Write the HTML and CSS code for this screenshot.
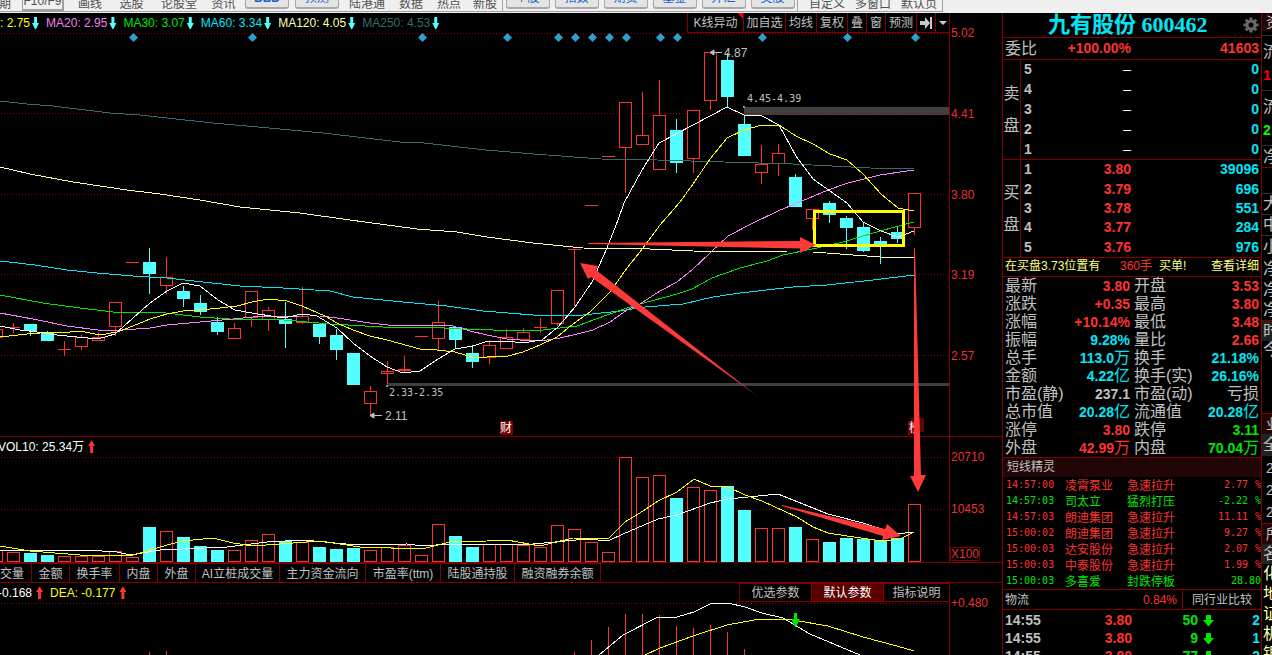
FILE: index.html
```html
<!DOCTYPE html>
<html lang="zh-CN">
<head>
<meta charset="utf-8">
<title>九有股份 600462</title>
<link rel="stylesheet" href="styles.css">
</head>
<body>
<nav class="toolbar">
  <div class="toolset">
    <button class="tool first">期</button>
    <button class="tool boxed">F10/F9</button>
    <button class="tool">画线</button>
    <button class="tool">选股</button>
    <button class="tool">论股堂</button>
    <button class="tool">资讯</button>
    <button class="tool key strong">BBD</button>
    <button class="tool key">预测</button>
    <button class="tool">陆港通</button>
    <button class="tool">数据</button>
    <button class="tool">热点</button>
    <button class="tool">新股</button>
    <span class="divider"></span>
    <button class="tool key">个股</button>
    <button class="tool key">指数</button>
    <button class="tool key">期货</button>
    <button class="tool key">基金</button>
    <button class="tool key">外汇</button>
    <button class="tool key">美股</button>
    <span class="divider"></span>
    <button class="tool">自定义</button>
    <button class="tool">多窗口</button>
    <button class="tool">默认页</button>
  </div>
</nav>

<div class="workspace">
  <main class="charts">
    <section class="panel price">
      <header class="head">
        <div class="legend">
          <span class="yellow">: 2.75<i class="mark down"></i></span>
          <span class="violet">MA20: 2.95<i class="mark down"></i></span>
          <span class="green">MA30: 3.07<i class="mark down"></i></span>
          <span class="aqua">MA60: 3.34<i class="mark down"></i></span>
          <span class="cream">MA120: 4.05<i class="mark down"></i></span>
          <span class="teal">MA250: 4.53<i class="mark down"></i></span>
        </div>
        <div class="actions">
          <button class="act flagged w56">K线异动</button>
          <button class="act w42">加自选</button>
          <button class="act w31">均线</button>
          <button class="act w31">复权</button>
          <button class="act w19">叠</button>
          <button class="act w19">窗</button>
          <button class="act w31">预测</button>
          <button class="act w19" aria-label="最新"><svg width="13" height="12" viewBox="0 0 13 12"><path d="M0 4h5V0l5 6-5 6V8H0z M10 0h2v12h-2z" fill="#c8c8c8"/></svg></button>
          <button class="act w14" aria-label="更多"><svg width="8" height="4" viewBox="0 0 8 4"><path d="M0 0h8L4 4z" fill="#c8c8c8"/></svg></button>
        </div>
      </header>
      <svg class="plot" id="price" height="403" viewBox="0 33 949 403" preserveAspectRatio="xMaxYMin meet"></svg>
      <div class="axis"><span>5.02</span><span>4.41</span><span>3.80</span><span>3.19</span><span>2.57</span></div>
    </section>

    <section class="panel volume">
      <header class="head">
        <div class="legend"><span class="white">VOL10: 25.34万<i class="mark up"></i></span></div>
      </header>
      <svg class="plot" id="volume" height="105" viewBox="0 457 949 105" preserveAspectRatio="xMaxYMin meet"></svg>
      <div class="axis"><span>20710</span><span>10453</span><span class="unit">X100</span></div>
    </section>

    <div class="tabs">
      <button class="tab w32">交量</button>
      <button class="tab w38">金额</button>
      <button class="tab w50">换手率</button>
      <button class="tab w38">内盘</button>
      <button class="tab w38">外盘</button>
      <button class="tab w84">AI立桩成交量</button>
      <button class="tab w86">主力资金流向</button>
      <button class="tab w75">市盈率(ttm)</button>
      <button class="tab w74">陆股通持股</button>
      <button class="tab w86">融资融券余额</button>
    </div>

    <section class="panel macd">
      <header class="head">
        <div class="legend"><span class="white">-0.168<i class="mark up"></i></span><span class="yellow">DEA: -0.177<i class="mark up"></i></span></div>
        <div class="actions">
          <button class="act w72">优选参数</button>
          <button class="act w72 active">默认参数</button>
          <button class="act w66">指标说明</button>
        </div>
      </header>
      <svg class="plot" id="macd" height="52" viewBox="0 603 949 52" preserveAspectRatio="xMaxYMin meet"></svg>
      <div class="axis"><span>+0.480</span></div>
    </section>

    <svg class="notes" height="642" viewBox="0 13 1002 642" preserveAspectRatio="xMaxYMin meet">
      <rect x="814.5" y="211.5" width="89" height="34" fill="none" stroke="#ffff00" stroke-width="3"/>
      <g fill="#fe3939">
        <path d="M588 243L800 241V237L816 245L800 253V248.500L588 244z"/>
        <path d="M580 263L598 266L596 270L756 395L591 277L588 279z"/>
        <path d="M914 248L915 248L921 475H926L918 492L910 476H914z"/>
        <path d="M782 505L885 529L887 524L901 536L882 540L883 536L782 506z"/>
      </g>
    </svg>
  </main>

  <aside class="quote">
    <h1 class="title"><span>九有股份 600462</span>
      <button class="gear" aria-label="设置"><svg width="16" height="16" viewBox="-8 -8 16 16"><circle r="4" fill="none" stroke="#686868" stroke-width="3"/><path d="M0-7.500V-4M0 7.500V4M-7.500 0H-4M7.500 0H4M-5.300-5.300L-3-3M5.300 5.300L3 3M-5.300 5.300L-3 3M5.300-5.300L3-3" stroke="#686868" stroke-width="3"/></svg></button>
    </h1>
    <div class="ratio"><span class="lbl">委比</span><b class="red">+100.00%</b><b class="red">41603</b></div>
    <div class="book">
      <div class="side"><span>卖</span><span>盘</span></div>
      <table>
        <tr><th>5</th><td class="dash">–</td><td>0</td></tr>
        <tr><th>4</th><td class="dash">–</td><td>0</td></tr>
        <tr><th>3</th><td class="dash">–</td><td>0</td></tr>
        <tr><th>2</th><td class="dash">–</td><td>0</td></tr>
        <tr><th>1</th><td class="dash">–</td><td>0</td></tr>
      </table>
    </div>
    <div class="book bids">
      <div class="side"><span>买</span><span>盘</span></div>
      <table>
        <tr><th>1</th><td class="red">3.80</td><td>39096</td></tr>
        <tr><th>2</th><td class="red">3.79</td><td>696</td></tr>
        <tr><th>3</th><td class="red">3.78</td><td>551</td></tr>
        <tr><th>4</th><td class="red">3.77</td><td>284</td></tr>
        <tr><th>5</th><td class="red">3.76</td><td>976</td></tr>
      </table>
    </div>
    <div class="notice"><span>在买盘3.73位置有</span><span class="red">360手</span><span>买单!</span><a href="#">查看详细</a></div>
    <table class="stats">
      <tr><th>最新</th><td class="red">3.80</td><th>开盘</th><td class="red">3.53</td></tr>
      <tr><th>涨跌</th><td class="red">+0.35</td><th>最高</th><td class="red">3.80</td></tr>
      <tr><th>涨幅</th><td class="red">+10.14%</td><th>最低</th><td class="red">3.48</td></tr>
      <tr><th>振幅</th><td class="aqua">9.28%</td><th>量比</th><td class="red">2.66</td></tr>
      <tr><th>总手</th><td class="aqua">113.0<i>万</i></td><th>换手</th><td class="aqua">21.18%</td></tr>
      <tr><th>金额</th><td class="aqua">4.22<i>亿</i></td><th>换手(实)</th><td class="aqua">26.16%</td></tr>
      <tr><th>市盈(静)</th><td>237.1</td><th>市盈(动)</th><td><i>亏损</i></td></tr>
      <tr><th>总市值</th><td class="aqua">20.28<i>亿</i></td><th>流通值</th><td class="aqua">20.28<i>亿</i></td></tr>
      <tr><th>涨停</th><td class="red">3.80</td><th>跌停</th><td class="green">3.11</td></tr>
      <tr><th>外盘</th><td class="red">42.99<i>万</i></td><th>内盘</th><td class="green">70.04<i>万</i></td></tr>
    </table>
    <h2 class="subhead">短线精灵</h2>
    <table class="alerts">
      <tr class="red"><td>14:57:00</td><td>凌霄泵业</td><td>急速拉升</td><td>2.77</td><td>%</td></tr>
      <tr class="green"><td>14:57:03</td><td>司太立</td><td>猛烈打压</td><td>-2.22</td><td>%</td></tr>
      <tr class="red"><td>14:57:03</td><td>朗迪集团</td><td>急速拉升</td><td>11.11</td><td>%</td></tr>
      <tr class="red"><td>15:00:02</td><td>朗迪集团</td><td>急速拉升</td><td>9.27</td><td>%</td></tr>
      <tr class="red"><td>15:00:03</td><td>达安股份</td><td>急速拉升</td><td>2.07</td><td>%</td></tr>
      <tr class="red"><td>15:00:03</td><td>中泰股份</td><td>急速拉升</td><td>1.99</td><td>%</td></tr>
      <tr class="green"><td>15:00:03</td><td>多喜爱</td><td>封跌停板</td><td colspan="2">28.80</td></tr>
    </table>
    <div class="sector"><span>物流</span><span class="red">0.84%</span><button class="peer">同行业比较</button></div>
    <table class="ticks">
      <tr><td>14:55</td><td class="red">3.80</td><td class="green">50</td><td><i class="mark sell"></i></td><td class="aqua">2</td></tr>
      <tr><td>14:55</td><td class="red">3.80</td><td class="green">9</td><td><i class="mark sell"></i></td><td class="aqua">1</td></tr>
      <tr><td>14:55</td><td class="red">3.80</td><td class="green">77</td><td><i class="mark sell"></i></td><td class="aqua">2</td></tr>
    </table>
  </aside>

  <aside class="rail">
    <span class="h18 small wine">资</span>
    <span class="h5 line"></span>
    <span class="h31">流</span><b class="h24 bright line">1</b>
    <span class="h31">流</span><b class="h24 lime line">2</b>
    <span class="h22 redline">净</span>
    <span class="h26 line"></span>
    <span class="h21 line">大</span><span class="h21 line">中</span><span class="h22">小</span>
    <span class="h21">净</span><span class="h21">净</span><span class="h21 redline">净</span>
    <span class="h20 grey">时</span><span class="h18">今</span>
    <span class="h55 redline"></span>
    <span class="h20 small wine">业</span><span class="h22 grey">全</span>
    <span class="h24 small">2</span><span class="h20 small">2</span><span class="h24 small redline">2</span>
    <span class="h20 small wine">所</span><span class="h20 grey">名</span>
    <span class="h20 cream">化</span><span class="h20 cream">地</span><span class="h20 cream">证</span><span class="h20 cream">机</span><span class="h20 cream">银</span>
  </aside>
</div>
<script src="chart.js"></script>
</body>
</html>
```

FILE: styles.css
```css
* { box-sizing: border-box; }
body {
  margin: 0;
  height: 100vh;
  overflow: hidden;
  display: flex;
  flex-direction: column;
  background: #000;
  color: #c0c0c0;
  font: 12px/16px "Liberation Sans", "Noto Sans CJK SC", sans-serif;
}
button { font: inherit; color: inherit; background: none; border: 0; padding: 0; white-space: nowrap; }
a { color: inherit; text-decoration: none; }
table { border-collapse: collapse; width: 100%; }
td, th { padding: 0; }
i { font-style: normal; }

.red { color: #ff3232; }
.green { color: #00e600; }
.aqua { color: #00e6f5; }
.yellow { color: #ffff00; }
.violet { color: #f080f0; }
.cream { color: #ffffb0; }
.teal { color: #346c70; }
.white { color: #fff; }

/* Toolbar */
.toolbar { flex: none; height: 13px; overflow: hidden; background: #f0f0f0; color: #505050; display: flex; }
.toolset {
  height: 12px;
  border: solid #a0a0a0;
  border-width: 0 1px 1px 0;
  display: grid;
  grid-template-columns: 16px 54px 40px 43px 52px 37px 50px 50px 50px 38px 38px 34px 1px repeat(6, 49px) 7px 46px 46px 46px;
  grid-template-rows: 11px;
  align-items: end;
}
.tool { height: 20px; line-height: 16px; margin-bottom: -3px; }
.tool.first { justify-self: start; margin-left: -1px; }
.tool.boxed { justify-self: center; width: 42px; height: 18px; margin-bottom: 0; line-height: 15px; border: 1px solid #a0a0a0; border-width: 0 2px 2px 1px; }
.tool.key { justify-self: center; width: 44px; margin-bottom: 2px; color: #1464c8; background: #e4e4e4; border: 1px solid #a8a8a8; border-bottom-width: 2px; border-radius: 3px; line-height: 17px; }
.strong { font-weight: bold; }
.divider { height: 11px; border-left: 1px solid #a0a0a0; }

/* Frame */
.workspace { position: relative; flex: 1; min-height: 0; display: flex; overflow: hidden; }
.charts { position: relative; flex: 1; min-width: 0; }
.notes { position: absolute; top: 0; left: 0; width: 100%; pointer-events: none; }

.panel { display: grid; grid-template-columns: minmax(0, 1fr) 53px; grid-template-rows: 20px auto; border-bottom: 1px solid #800000; }
.head { display: flex; justify-content: space-between; min-width: 0; }
.plot { display: block; width: 100%; grid-column: 1; }
.axis {
  grid-column: 2;
  grid-row: 1 / 3;
  border-left: 1px solid #800000;
  color: #e63232;
  display: flex;
  flex-direction: column;
  justify-content: space-between;
  align-items: flex-start;
  padding: 12px 0 0 1px;
}
.price .axis { padding-bottom: 72px; }
.volume .axis { justify-content: flex-start; gap: 36px; }
.volume .unit { border: 1px solid #800000; line-height: 12px; margin: -6px 0 0 -1px; }

.legend { display: flex; gap: 7px; line-height: 20px; white-space: nowrap; }
.volume .legend, .macd .legend { margin-left: -2px; }
.mark { display: inline-block; vertical-align: -2px; margin-left: 2px; width: 7px; height: 12px; }
.down { background: #54ffff; clip-path: polygon(2px 0, 5px 0, 5px 6px, 7px 6px, 4px 12px, 3px 12px, 0 6px, 2px 6px); }
.up { margin-left: 4px; background: #ff3232; clip-path: polygon(2px 12px, 5px 12px, 5px 5px, 7px 5px, 4px 0, 3px 0, 0 5px, 2px 5px); }
.sell { width: 12px; height: 12px; margin-left: 4px; background: #00e600; clip-path: polygon(4px 0, 9px 0, 9px 5px, 12px 5px, 7px 11px, 6px 11px, 1px 5px, 4px 5px); }

.actions { display: flex; }
.act { border: solid #800000; border-width: 0 0 1px 1px; line-height: 19px; padding-top: 1px; display: flex; align-items: center; justify-content: center; }
.macd .act { border-top-width: 1px; height: 19px; }
.active { background: #5a0000; color: #fff; }
.flagged { background: linear-gradient(225deg, #ff0000 4px, transparent 4px); }
.w14 { width: 14px; } .w19 { width: 19px; } .w31 { width: 31px; } .w32 { width: 32px; }
.w38 { width: 38px; } .w42 { width: 42px; } .w50 { width: 50px; } .w56 { width: 56px; }
.w66 { width: 66px; } .w72 { width: 72px; } .w74 { width: 74px; } .w75 { width: 75px; }
.w84 { width: 84px; } .w86 { width: 86px; }

.tabs { display: flex; height: 20px; border-bottom: 1px solid #800000; }
.tab { border-right: 1px solid #800000; border-top: 1px solid #800000; padding-top: 1px; }
.tab.w32 { text-align: left; }

/* Quote */
.quote { flex: none; width: 260px; border: solid #800000; border-width: 0 1px; }
.title { position: relative; margin: 0; height: 25px; border-bottom: 1px solid #800000; padding-left: 45px; color: #00e6f5; font: bold 22px/24px "Liberation Serif", "Noto Sans CJK SC", serif; white-space: nowrap; }
.gear { position: absolute; right: 2px; top: 4px; line-height: 0; }
.ratio { display: grid; grid-template-columns: 38px 88px 1fr; height: 22px; line-height: 21px; border-bottom: 1px solid #800000; font-size: 14px; text-align: right; padding: 0 2px; }
.lbl { font-size: 16px; text-align: left; }
.book { display: grid; grid-template-columns: 18px 1fr; height: 100px; border-bottom: 1px solid #800000; }
.book.bids { height: 98px; }
.side { border-right: 1px solid #800000; display: flex; flex-direction: column; align-items: center; justify-content: center; gap: 16px; font-size: 16px; }
.book table { font: bold 14px/19px "Liberation Sans", sans-serif; height: 100%; }
.book th { width: 16px; text-align: left; padding-left: 3px; }
.book td { width: 94px; text-align: right; }
.book td:last-child { color: #00e6f5; width: auto; padding-right: 2px; }
.book .dash { color: #fff; font-weight: normal; }
.notice { display: grid; grid-template-columns: 115px 39px 1fr auto; height: 19px; line-height: 17px; border-bottom: 1px solid #800000; color: #ffff80; padding: 0 2px; white-space: nowrap; }
.stats { table-layout: fixed; border-bottom: 1px solid #800000; }
.stats tr { height: 18px; }
.stats th { width: 62px; font-size: 16px; line-height: 18px; font-weight: normal; text-align: left; padding-left: 2px; white-space: nowrap; }
.stats td { font-size: 14px; line-height: 18px; font-weight: bold; text-align: right; padding-right: 2px; white-space: nowrap; }
.stats i { font-size: 16px; font-weight: normal; line-height: 16px; }
.subhead { margin: 0; height: 19px; background: #220506; font-size: 12px; line-height: 19px; font-weight: normal; padding-left: 4px; }
.alerts { table-layout: fixed; border-bottom: 1px solid #800000; font-family: "Noto Sans CJK SC", sans-serif; }
.alerts tr { height: 16px; }
.alerts td { line-height: 16px; white-space: nowrap; }
.alerts td:nth-child(1) { width: 62px; padding-left: 3px; }
.alerts td:nth-child(2) { width: 62px; }
.alerts td:nth-child(3) { width: 62px; }
.alerts td:nth-child(4) { text-align: right; }
.alerts td:nth-child(5) { width: 13px; text-align: right; }
.alerts td:nth-child(1), .alerts td:nth-child(4), .alerts td:nth-child(5) { font-family: "DejaVu Sans Mono", monospace; font-size: 10px; }
.sector { display: grid; grid-template-columns: 60px 118px 1fr; height: 20px; line-height: 20px; border-bottom: 1px solid #800000; padding-left: 2px; }
.sector .red { text-align: right; padding-right: 5px; border-right: 1px solid #800000; }
.ticks { table-layout: fixed; font: bold 14px/18px "Liberation Sans", sans-serif; margin-top: 1px; }
.ticks tr { height: 18px; }
.ticks td { text-align: right; }
.ticks td:nth-child(1) { width: 60px; text-align: left; padding-left: 2px; }
.ticks td:nth-child(2) { width: 69px; }
.ticks td:nth-child(3) { width: 66px; }
.ticks td:nth-child(4) { width: 18px; text-align: left; }
.ticks td:nth-child(5) { padding-right: 1px; }

/* Clipped neighbour pane */
.rail { flex: none; width: 10px; overflow: hidden; display: flex; flex-direction: column; font-size: 16px; }
.rail > * { flex: none; padding-left: 1px; display: flex; align-items: center; white-space: nowrap; }
.rail .small { font-size: 14px; padding-left: 4px; }
.rail b { font-size: 14px; align-items: flex-start; }
.line { border-bottom: 1px solid #303030; }
.redline { border-bottom: 1px solid #800000; }
.wine { background: #220506; }
.grey { background: #222; }
.bright { color: #ff0000; }
.lime { color: #00ff00; }
.h5 { height: 5px; } .h18 { height: 18px; } .h20 { height: 20px; } .h21 { height: 21px; }
.h22 { height: 22px; } .h24 { height: 24px; } .h26 { height: 26px; } .h31 { height: 31px; }
.h55 { height: 55px; }

/* Plots */
.grid { stroke: #900000; stroke-dasharray: 1 2; shape-rendering: crispEdges; }
.rise { stroke: #ff3232; fill: none; shape-rendering: crispEdges; }
.hollow { fill: #000; }
.fall { fill: #54ffff; stroke: none; shape-rendering: crispEdges; }
.curve { fill: none; shape-rendering: crispEdges; }
.tag { font: 12px "Liberation Sans", "Noto Sans CJK SC", sans-serif; fill: #c0c0c0; }
.range { font: 10px "DejaVu Sans Mono", monospace; }
.badge { fill: #fff; }
```

FILE: chart.js
```js
const STEP = 17;
const UP = 1, DOWN = 0;

// [direction, body top, body bottom, wick top, wick bottom], oldest first
const candles = [
  [UP,329,337,329,337],[UP,327,327,323,333],[DOWN,324,331,324,336],[DOWN,332,341,331,341],
  [UP,349,349,341,356],[UP,337,346,335,350],[UP,337,340,332,340],[UP,302,326,302,336],
  [UP,262,262,262,262],[DOWN,262,274,248,294],[UP,277,285,257,294],[DOWN,291,299,286,307],
  [DOWN,303,312,295,315],[DOWN,322,332,317,335],[UP,328,338,323,338],[UP,291,317,291,327],
  [UP,310,319,307,331],[DOWN,319,324,302,348],[UP,316,322,287,324],[DOWN,324,337,324,344],
  [DOWN,335,350,329,360],[DOWN,353,385,353,385],[UP,391,403,386,416],[UP,371,373,361,384],
  [UP,369,370,356,373],[UP,336,336,336,336],[UP,322,338,301,350],[DOWN,327,340,327,349],
  [DOWN,353,362,345,368],[UP,345,357,340,364],[UP,337,348,329,348],[UP,332,339,328,339],
  [UP,327,327,318,333],[UP,290,323,290,326],[UP,249,249,249,306],[UP,205,205,205,205],
  [UP,156,156,156,156],[UP,102,147,102,193],[UP,135,144,92,144],[UP,115,169,80,169],
  [DOWN,130,163,119,173],[UP,110,158,110,173],[UP,52,100,52,110],[DOWN,60,97,53,107],
  [DOWN,124,156,115,156],[UP,164,172,145,184],[UP,153,163,144,176],[DOWN,177,207,174,207],
  [UP,209,218,209,230],[DOWN,203,215,201,223],[DOWN,218,228,216,249],[DOWN,227,251,222,252],
  [DOWN,241,245,237,264],[DOWN,232,239,226,243],[UP,193,227,193,235]
];
const volumes = [
  550,552,553,555,556,556,556,551,557,527,531,537,546,550,550,540,534,541,542,547,549,548,
  550,547,545,555,524,536,547,544,544,545,547,525,529,542,552,457,477,475,498,487,490,486,
  510,528,528,527,539,542,538,539,540,538,504
];

const line = (points, color) => `<polyline class="curve" stroke="${color}" points="${points}"/>`;
const grid = ys => ys.map(y => `<path class="grid" d="M1 ${y}.5H949"/>`).join('');
const bar = (up, x, top, bottom) => up
  ? `<rect class="rise hollow" x="${x - 5.5}" y="${top + 0.5}" width="12" height="${bottom - top}"/>`
  : `<rect class="fall" x="${x - 6}" y="${top}" width="13" height="${bottom - top}"/>`;

let price = grid([33, 113, 194, 274, 355]) +
  '<path d="M744 107H949V115H744z M387 383H949V386H387z" fill="#404040"/>' +
  '<path class="grid" d="M745 113.5H949"/>';
candles.forEach(([up, top, bottom, high, low], i) => {
  const x = -4 + i * STEP;
  const color = up ? '#ff3232' : '#54ffff';
  if (high < low) price += `<path d="M${x + 0.5} ${high}V${low}" stroke="${color}" shape-rendering="crispEdges"/>`;
  price += up && top === bottom
    ? `<path class="rise" d="M${x - 6} ${top + 0.5}h13"/>`
    : bar(up, x, top, bottom);
});
price += line('0,101 27,104 53,106 110,113 140,115 167,118 213,123 280,129 323,133 400,142 424,143 486,150 534,154 601,159 657,160 724,162 793,164 870,168 914,169', '#346c70');
price += line('0,167 30,174 73,182 127,190 160,194 200,200 240,207 300,213 350,220 417,229 457,232 487,237 533,243 583,248 650,249 693,251 787,252 813,252 880,257 914,257', '#ffffb0');
price += line('0,261 35,265 67,270 97,273 133,276 167,278 203,282 240,286 283,288 330,291 353,297 403,302 447,306 483,311 533,315 583,315 620,311 645,307 683,304 713,297 740,293 793,287 827,285 873,280 914,275', '#00e6f5');
price += line('0,295 43,303 80,308 113,312 158,312 200,317 230,319 273,319 307,322 330,324 400,328 420,327 467,329 493,330 543,330 577,326 607,315 627,308 640,304 677,294 692,289 712,278 740,268 767,261 783,255 817,248 843,242 880,231 914,222', '#00e600');
price += line('0,313 33,319 67,326 98,330 123,330 150,328 167,325 200,322 233,319 253,317 300,316 320,316 337,318 370,323 388,325 420,326 437,325 453,326 470,331 487,335 507,339 520,340 540,341 560,338 577,334 593,330 610,322 627,310 640,304 660,291 677,282 693,269 710,253 728,236 753,223 778,211 802,201 828,190 848,183 880,175 914,170', '#ff80ff');
price += line('0,337 27,334 53,332 70,332 80,331 100,335 117,332 133,326 150,319 167,314 183,311 200,310 220,308 237,306 252,302 268,299 287,301 302,306 325,316 337,323 353,330 370,336 387,340 420,349 437,350 455,352 472,357 487,357 508,356 523,352 540,345 557,337 573,324 590,312 610,292 627,268 640,252 660,225 680,202 693,184 710,159 727,138 744,130 762,125 779,125 796,136 813,144 830,154 847,160 863,174 881,194 898,208 914,211', '#ffff00');
price += line('0,326 20,330 37,332 57,335 77,337 98,339 115,334 133,318 150,303 167,291 183,283 200,286 218,300 235,310 252,313 277,317 288,317 302,314 317,316 337,328 353,343 370,356 387,367 403,373 420,371 438,359 455,349 473,346 488,341 507,341 522,343 542,340 558,327 575,307 592,282 607,248 618,220 624,203 642,170 659,143 676,134 693,125 710,116 727,107 744,115 762,116 779,125 796,156 813,179 830,191 847,203 863,222 881,231 898,237 914,231', '#ffffff');
[133, 252, 422, 507, 558, 575, 592, 609, 626, 660, 677, 762, 847, 915].forEach(x => {
  price += `<path d="M${x + 0.5} 33l4.5 4.500-4.500 4.500-4.500-4.500z" fill="#2f9fcc"/>`;
});
price += '<path d="M722 52.500H711M714 50l-4 2.500 4 2.500zM382 415.500H372M374 413l-4 2.500 4 2.500z" stroke="#c0c0c0" fill="#c0c0c0"/>' +
  '<path d="M743 106h2v2h-2zM386 385h2v2h-2z" fill="#909090"/>' +
  '<text class="tag" x="724" y="57">4.87</text><text class="tag" x="385" y="420">2.11</text>' +
  '<text class="tag range" x="747" y="102">4.45-4.39</text><text class="tag range" x="389" y="396">2.33-2.35</text>' +
  '<path d="M500 421h13v14h-13z" fill="#800000"/><text class="tag badge" x="500" y="432">财</text>' +
  '<path d="M911 418h13v14h-13z" fill="#580808"/><path d="M908 421h12v14h-12z" fill="#800000"/>' +
  '<svg x="908" y="421" width="8" height="14"><text class="tag badge" x="1" y="11">榜</text></svg>';
document.getElementById('price').innerHTML = price;

let volume = grid([457, 509]);
volumes.forEach((top, i) => {
  const up = candles[i][0];
  volume += bar(up, -4 + i * STEP, top, up ? 561 : 562);
});
volume += line('0,550 87,550 117,552 130,555 160,550 227,547 267,542 303,540 357,545 407,544 422,546 450,544 477,545 533,544 587,539 608,541 623,534 658,519 677,515 710,503 728,499 778,494 828,514 863,523 897,534 914,532', '#ffffff');
volume += line('0,546 30,551 80,555 133,555 147,551 167,545 183,541 213,538 233,543 253,546 320,541 360,547 422,549 450,542 487,541 507,540 540,546 573,538 608,539 625,522 643,511 658,501 677,492 694,479 710,486 728,487 745,495 762,501 797,517 813,527 828,533 847,536 882,541 900,539 914,532', '#ffff00');
document.getElementById('volume').innerHTML = volume;

let macd = grid([603]);
[[149,652],[166,651],[574,652],[591,640],[608,627],[625,614],[642,614],[659,615],[676,626],[693,628],[710,625],[727,632],[744,649]].forEach(([x, y]) => {
  macd += `<path class="rise" d="M${x + 0.5} ${y}V655"/>`;
});
macd += line('599,655 623,635 658,617 677,617 694,612 710,604 728,603 745,607 762,613 783,618 810,634 860,655', '#ffffff');
macd += line('645,655 660,648 693,636 727,625 760,619 793,620 828,626 863,637 897,646 914,651', '#ffff00');
macd += '<path d="M794 613h3v6h3l-4 8h-1l-4-8h3z" fill="#00e600"/>';
document.getElementById('macd').innerHTML = macd;
```
